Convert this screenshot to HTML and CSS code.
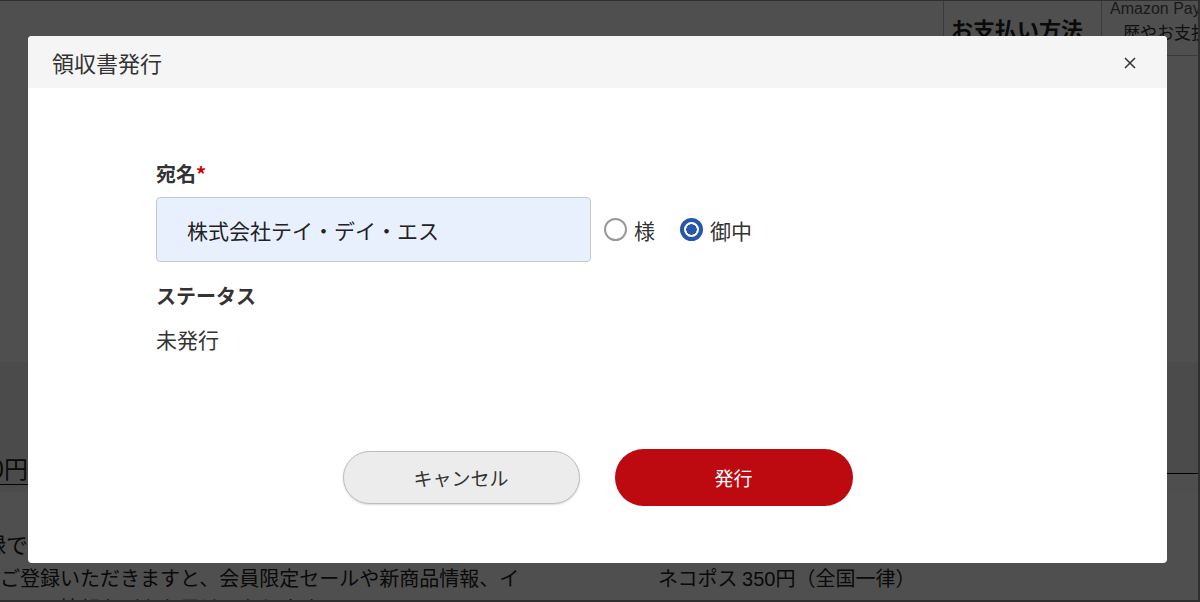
FILE: index.html
```html
<!DOCTYPE html>
<html lang="ja">
<head>
<meta charset="utf-8">
<title>領収書発行</title>
<link rel="stylesheet" href="styles.css">
</head>
<body>
<div class="page">
  <div class="top-table">
    <div class="top-spacer"></div>
    <div class="th-cell">お支払い方法</div>
    <div class="td-col">
      <div class="td-cell">
        <p class="pay-name">Amazon Pay</p>
        <p class="pay-note">歴やお支払い方法の変更</p>
      </div>
      <div class="td-cell td-cell-2"></div>
    </div>
  </div>
  <div class="blank"></div>
  <div class="grey-section">
    <div class="price-line">
      <div class="clip-end"><span class="price">合計 11,000円</span></div>
      <div class="grey-right">
        <div class="grey-right-box"></div>
      </div>
    </div>
  </div>
  <div class="lower">
    <div class="col-left">
      <div class="clip-end"><h3 class="member-title">会員登録で</h3></div>
      <p class="member-text">ご登録いただきますと、会員限定セールや新商品情報、イベント情報などをお届けいたします。</p>
    </div>
    <div class="col-right">
      <p class="ship-text">ネコポス <span class="num">350</span>円（全国一律）</p>
      <p class="ship-note">※ポストへのお届けとなります</p>
    </div>
  </div>
</div>

<div class="overlay">
  <div class="modal" role="dialog" aria-labelledby="modal-title">
    <div class="modal-header">
      <h2 id="modal-title" class="modal-title">領収書発行</h2>
      <button class="close-btn" aria-label="閉じる">
        <svg width="12" height="12" viewBox="0 0 12 12"><path d="M1 1 L11 11 M11 1 L1 11" stroke="#333" stroke-width="1.5" fill="none"/></svg>
      </button>
    </div>
    <div class="modal-body">
      <div class="field-label">宛名<span class="req">*</span></div>
      <div class="name-row">
        <input class="name-input" type="text" value="株式会社テイ・デイ・エス">
        <div class="radio-group">
          <label class="radio"><input type="radio" name="honor"><span>様</span></label>
          <label class="radio"><input type="radio" name="honor" checked><span>御中</span></label>
        </div>
      </div>
      <div class="field-label label-status">ステータス</div>
      <div class="field-value">未発行</div>
      <div class="actions">
        <button class="btn btn-cancel">キャンセル</button>
        <button class="btn btn-issue">発行</button>
      </div>
    </div>
  </div>
</div>
</body>
</html>
```

FILE: styles.css
```css
* {
  box-sizing: border-box;
  margin: 0;
  padding: 0;
}

html, body {
  width: 1200px;
  height: 602px;
  overflow: hidden;
}

body {
  font-family: "Noto Sans CJK JP", "Noto Sans", sans-serif;
  color: #333;
  background: #fff;
}

/* ---------- background page ---------- */
.page {
  width: 1200px;
  height: 602px;
  border-top: 1px solid #999;
  border-right: 2px solid #999;
  border-bottom: 2px solid #999;
  overflow: hidden;
  display: flex;
  flex-direction: column;
}

.top-table {
  display: flex;
  height: 100px;
  flex: none;
}

.top-spacer {
  width: 943px;
  flex: none;
}

.th-cell {
  width: 159px;
  flex: none;
  border-left: 1px solid #bbb;
  border-right: 1px solid #bbb;
  padding: 11px 0 0 7px;
  font-size: 22px;
  line-height: 32px;
  font-weight: bold;
  color: #222;
  white-space: nowrap;
}

.td-col {
  flex: 1;
  min-width: 0;
  display: flex;
  flex-direction: column;
}

.td-cell {
  height: 55px;
  border-bottom: 1px solid #bbb;
  padding-left: 8px;
  white-space: nowrap;
  overflow: hidden;
}

.td-cell-2 {
  flex: 1;
  border-bottom: none;
}

.pay-name {
  font-family: "Liberation Sans", sans-serif;
  font-size: 16px;
  line-height: 20px;
  margin-top: -2px;
  color: #555;
}

.pay-note {
  font-size: 17px;
  line-height: 26px;
  padding-left: 13px;
  color: #333;
}

.blank {
  height: 261px;
  flex: none;
}

.grey-section {
  height: 130px;
  flex: none;
  background: #f2f2f2;
}

.price-line {
  display: flex;
  height: 100%;
}

.clip-end {
  width: 28px;
  flex: none;
  display: flex;
  justify-content: flex-end;
  white-space: nowrap;
}

.price {
  margin-top: 91px;
  font-size: 24px;
  line-height: 30px;
  height: 32px;
  color: #222;
  border-bottom: 1px solid #111;
}

.grey-right {
  flex: 1;
  display: flex;
  justify-content: flex-end;
}

.grey-right-box {
  width: 33px;
  margin-top: 111px;
  border-top: 1px solid #000;
  height: 20px;
  background: #fafafa;
}

.lower {
  flex: 1;
  display: flex;
  gap: 70px;
}

.col-left {
  width: 560px;
  flex: none;
  padding-top: 36px;
}

.member-title {
  font-size: 22px;
  line-height: 30px;
  font-weight: normal;
  color: #222;
}

.member-text {
  font-size: 20px;
  line-height: 30px;
  color: #222;
  width: 526px;
  margin-top: 5px;
}

.col-right {
  flex: 1;
  background: #fff;
  padding: 71px 0 0 28px;
}

.ship-text {
  font-size: 20px;
  line-height: 30px;
  color: #222;
  white-space: nowrap;
}

.ship-text .num {
  font-family: "Liberation Sans", sans-serif;
  font-weight: 300;
}

.ship-note {
  font-size: 18px;
  line-height: 30px;
  padding-left: 32px;
  color: #222;
}

/* ---------- overlay & modal ---------- */
.overlay {
  position: fixed;
  inset: 0;
  background: rgba(0, 0, 0, 0.69);
  padding: 36px 0 0 28px;
}

.modal {
  width: 1139px;
  background: #fff;
  border-radius: 4px;
  overflow: hidden;
}

.modal-header {
  height: 52px;
  background: #f5f5f5;
  display: flex;
  align-items: center;
  justify-content: space-between;
  padding: 0 31px 0 24px;
}

.modal-title {
  font-size: 22px;
  font-weight: normal;
  color: #333;
  line-height: 30px;
}

.close-btn {
  border: none;
  background: none;
  width: 12px;
  height: 12px;
  display: flex;
  cursor: pointer;
  margin-top: 1px;
}

.modal-body {
  padding: 72px 128px 57px;
}

.field-label {
  font-size: 20px;
  line-height: 28px;
  font-weight: bold;
  color: #333;
}

.req {
  color: #c00;
}

.name-row {
  display: flex;
  align-items: center;
  margin-top: 9px;
}

.name-input {
  width: 435px;
  height: 65px;
  background: #e8f0fe;
  border: 1px solid #c8c8c8;
  border-radius: 4px;
  padding: 0 0 0 30px;
  font-family: inherit;
  font-size: 21px;
  color: #222;
  outline: none;
}

.radio-group {
  display: flex;
  align-items: center;
  gap: 25px;
  margin-left: 13px;
  margin-top: 0;
}

.radio {
  display: flex;
  align-items: center;
  gap: 7px;
  font-size: 21px;
  line-height: 28px;
  color: #333;
}

.radio input {
  appearance: none;
  -webkit-appearance: none;
  width: 23px;
  height: 23px;
  border-radius: 50%;
  border: 2.5px solid #999;
  background: #fff;
  margin: 0;
}

.radio input:checked {
  border: 4px solid #2657ab;
  background: radial-gradient(circle, #2657ab 0 5px, #fff 5.5px);
}

.label-status {
  margin-top: 20px;
}

.field-value {
  margin-top: 15px;
  font-size: 21px;
  line-height: 28px;
  color: #333;
}

.actions {
  margin-top: 96px;
  display: flex;
  justify-content: center;
  align-items: center;
  gap: 35px;
  height: 57px;
}

.btn {
  font-family: inherit;
  border-radius: 999px;
  cursor: pointer;
  font-size: 19px;
}

.btn-cancel {
  width: 237px;
  height: 53px;
  background: #ececec;
  border: 1px solid #bdbdbd;
  box-shadow: 0 1px 2px rgba(0, 0, 0, 0.15);
  color: #333;
}

.btn-issue {
  width: 238px;
  height: 57px;
  background: #bd0a11;
  border: none;
  color: #fff;
}
```
